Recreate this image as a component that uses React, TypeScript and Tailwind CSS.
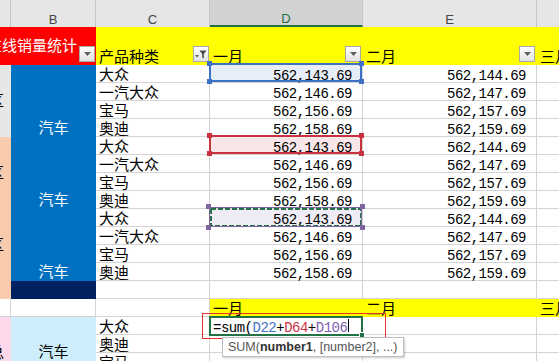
import React from "react";

const products = [
  ["大众", "562,143.69", "562,144.69"],
  ["一汽大众", "562,146.69", "562,147.69"],
  ["宝马", "562,156.69", "562,157.69"],
  ["奥迪", "562,158.69", "562,159.69"],
];

const lines = "border-r border-b border-[#d4d4d4]";
const cell = `${lines} bg-white`;
const num = "font-['Liberation_Mono',monospace] text-[14px] tracking-[-0.5px] leading-none";
const hdr = "flex items-end justify-center border-r border-[#c6c6c6] pb-[1px] leading-none";

function FilterBtn({ filtered = false }: { filtered?: boolean }) {
  return (
    <div className="mb-[3px] flex h-4 w-4 shrink-0 items-center justify-center self-end border border-[#a9a9a9] bg-linear-to-b from-white to-[#e2e2e2]">
      {filtered ? (
        <svg width="12" height="11" viewBox="0 0 12 11">
          <path d="M0 6h4L2 8.5z" fill="#5f5f5f" />
          <path d="M4.5 1.5h7L8.8 5v4.5l-1.6-1V5z" fill="#4a4a4a" />
        </svg>
      ) : (
        <svg width="7" height="4" viewBox="0 0 7 4">
          <path d="M0 0h7L3.5 4z" fill="#5f5f5f" />
        </svg>
      )}
    </div>
  );
}

function Handles({ tone }: { tone: string }) {
  return (
    <>
      <span className={`absolute -left-[4px] -top-[4px] h-[5px] w-[5px] ${tone}`} />
      <span className={`absolute -right-[4px] -top-[4px] h-[5px] w-[5px] ${tone}`} />
      <span className={`absolute -bottom-[4px] -left-[4px] h-[5px] w-[5px] ${tone}`} />
      <span className={`absolute -bottom-[4px] -right-[4px] h-[5px] w-[5px] ${tone}`} />
    </>
  );
}

function DataCell({ value, i }: { value: string; i: number }) {
  if (i === 0)
    return (
      <div className={`${lines} relative bg-[#e8eef8] pr-[10px] text-right`}>
        <span className={num}>{value}</span>
        <div className="absolute -top-[2px] -left-px right-0 bottom-0 border-2 border-[#3e72c6]">
          <Handles tone="bg-[#3e72c6]" />
        </div>
      </div>
    );
  if (i === 4)
    return (
      <div className={`${lines} relative bg-[#f9e6e8] pr-[10px] text-right`}>
        <span className={num}>{value}</span>
        <div className="absolute -top-[2px] -left-px right-0 bottom-0 border-2 border-[#c8323f]">
          <Handles tone="bg-[#c8323f]" />
        </div>
      </div>
    );
  if (i === 8)
    return (
      <div className={`${lines} relative bg-[#efecf6] pr-[10px] text-right`}>
        <span className={num}>{value}</span>
        <div className="absolute -top-[2px] -left-px right-0 -bottom-px border border-[#8064a2]">
          <svg className="absolute inset-0 h-full w-full">
            <rect x="1" y="1" width="150" height="17" fill="none" stroke="#217346" strokeWidth="2" strokeDasharray="5 2" />
          </svg>
          <Handles tone="bg-[#8064a2]" />
        </div>
      </div>
    );
  return (
    <div className={`${cell} pr-[10px] text-right`}>
      <span className={num}>{value}</span>
    </div>
  );
}

export default function App() {
  const rows = [...products, ...products, ...products];
  return (
    <div className="relative h-[361px] w-[559px] overflow-hidden bg-white font-['Noto_Sans_CJK_SC',sans-serif] text-[15px] leading-[18px] text-black">
      {/* column headers */}
      <div className="flex h-[27px] bg-[#e6e6e6] font-['Liberation_Sans',sans-serif] text-[13px] text-[#444]">
        <div className="w-[11px] border-r border-[#c6c6c6]" />
        <div className={`w-[85px] ${hdr}`}>B</div>
        <div className={`w-[114px] ${hdr}`}>C</div>
        <div className="flex w-[153px] items-end justify-center border-r border-b-2 border-r-[#c6c6c6] border-b-[#217346] bg-[#d2d2d2] leading-none text-[#217346]">
          D
        </div>
        <div className={`w-[174px] ${hdr}`}>E</div>
        <div className="flex-1" />
      </div>

      <div className="grid grid-cols-[11px_85px_114px_153px_174px_22px] grid-rows-[38px_repeat(18,18px)]">
        {/* title row */}
        <div className="col-span-2 flex min-w-0 items-center justify-end bg-[#ff0000] pr-px text-white">
          <span className="shrink-0 whitespace-nowrap pb-[3px]">在线销量统计</span>
          <div className="ml-[2px] flex self-end">
            <FilterBtn />
          </div>
        </div>
        <div className="flex items-end justify-between bg-[#ffff00] pl-[3px] pr-px">
          <span className="whitespace-nowrap">产品种类</span>
          <FilterBtn filtered />
        </div>
        <div className="flex items-end justify-between bg-[#ffff00] pl-[3px] pr-[2px]">
          <span>一月</span>
          <FilterBtn />
        </div>
        <div className="flex items-end justify-between bg-[#ffff00] pl-[3px] pr-[2px]">
          <span>二月</span>
          <FilterBtn />
        </div>
        <div className="flex items-end bg-[#ffff00] pl-[3px]">
          <span className="whitespace-nowrap">三月</span>
        </div>

        {rows.map((r, i) => (
          <React.Fragment key={i}>
            {i % 4 === 0 && (
              <div
                className={`row-span-4 flex items-center overflow-hidden pb-[3px] ${
                  i === 0 ? "bg-[#e7e6e6]" : "bg-[#f8cbad]"
                }`}
              >
                <span className="-ml-[11px] shrink-0">区</span>
              </div>
            )}
            {i % 4 === 0 && (
              <div className="row-span-4 flex items-end justify-center bg-[#0070c0] pb-[1px] text-white">汽车</div>
            )}
            <div className={`${cell} pl-[3px] whitespace-nowrap`}>{r[0]}</div>
            <DataCell value={r[1]} i={i} />
            <div className={`${cell} pr-[10px] text-right`}>
              <span className={num}>{r[2]}</span>
            </div>
            <div className="border-b border-[#d4d4d4]" />
          </React.Fragment>
        ))}

        {/* navy row */}
        <div className="bg-[#f8cbad]" />
        <div className="bg-[#002060]" />
        <div className={cell} />
        <div className={cell} />
        <div className={cell} />
        <div className="border-b border-[#d4d4d4]" />

        {/* second header row */}
        <div className={cell} />
        <div className={cell} />
        <div className={cell} />
        <div className="bg-[#ffff00] pl-[3px]">一月</div>
        <div className="bg-[#ffff00] pl-[3px]">二月</div>
        <div className="bg-[#ffff00] pl-[3px] whitespace-nowrap">三月</div>

        {/* formula rows */}
        <div className="row-span-4 overflow-hidden bg-[#fcd8eb] pt-[26px]">
          <span className="-ml-[11px] inline-block">总</span>
        </div>
        <div className="row-span-4 bg-[#cdedfb] pt-[25px] text-center">汽车</div>

        <div className={`${cell} pl-[3px]`}>大众</div>
        <div className={`${cell} relative whitespace-nowrap pl-[3px]`}>
          <span className={num}>
            =sum(<span className="text-[#3e72c6]">D22</span>+<span className="text-[#c8323f]">D64</span>+
            <span className="text-[#7f5fb0]">D106</span>
          </span>
          <span className="ml-px inline-block h-[13px] w-px bg-black" />
          <div className="absolute -top-px -left-px -right-px -bottom-[2px] border-2 border-[#217346]">
            <span className="absolute -right-[4px] -bottom-[4px] h-[6px] w-[6px] border border-white bg-[#217346]" />
          </div>
          <div className="absolute -left-[8px] -top-[4px] h-[26px] w-[184px] border-[1.5px] border-[#e5312d]" />
          <div className="absolute left-[12px] top-[20px] flex h-[20px] items-center whitespace-nowrap border border-[#bebebe] bg-white px-[5px] font-['Liberation_Sans',sans-serif] text-[12.5px] leading-none text-[#555] shadow-[1px_1px_2px_rgba(0,0,0,0.2)]">
            SUM(<b className="font-bold text-[#333]">number1</b>, [number2], ...)
          </div>
        </div>
        <div className={cell} />
        <div className="border-b border-[#d4d4d4]" />

        <div className={`${cell} pl-[3px]`}>奥迪</div>
        <div className={cell} />
        <div className={cell} />
        <div className="border-b border-[#d4d4d4]" />

        <div className={`${cell} pl-[3px]`}>宝马</div>
        <div className={cell} />
        <div className={cell} />
        <div className="border-b border-[#d4d4d4]" />

        <div className={`${cell} pl-[3px]`} />
        <div className={cell} />
        <div className={cell} />
        <div className="border-b border-[#d4d4d4]" />
      </div>
    </div>
  );
}
